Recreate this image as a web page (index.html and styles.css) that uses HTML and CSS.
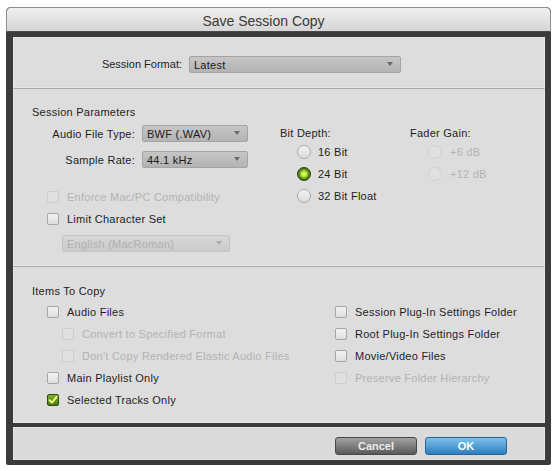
FILE: index.html
```html
<!DOCTYPE html>
<html>
<head>
<meta charset="utf-8">
<title>Save Session Copy</title>
<link rel="stylesheet" href="styles.css">
</head>
<body>
<div class="window">
  <div class="titlebar">Save Session Copy</div>
  <div class="frame">
    <div class="main">
      <section class="panel panel-format">
        <span class="format-label">Session Format:</span>
        <div class="select select-format">Latest</div>
      </section>

      <section class="panel panel-params">
        <div class="heading">Session Parameters</div>
        <div class="params">
          <div class="col-left">
            <div class="field"><span class="field-label">Audio File Type:</span><div class="select select-small">BWF (.WAV)</div></div>
            <div class="field field-2"><span class="field-label">Sample Rate:</span><div class="select select-small">44.1 kHz</div></div>
            <div class="check disabled check-first"><span class="box"></span>Enforce Mac/PC Compatibility</div>
            <div class="check check-second"><span class="box"></span>Limit Character Set</div>
            <div class="select select-disabled">English (MacRoman)</div>
          </div>
          <div class="col-bits">
            <div class="group-label">Bit Depth:</div>
            <div class="radio"><span class="dot"></span>16 Bit</div>
            <div class="radio"><span class="dot on"></span>24 Bit</div>
            <div class="radio"><span class="dot"></span>32 Bit Float</div>
          </div>
          <div class="col-gain">
            <div class="group-label">Fader Gain:</div>
            <div class="radio disabled"><span class="dot"></span>+6 dB</div>
            <div class="radio disabled"><span class="dot"></span>+12 dB</div>
          </div>
        </div>
      </section>

      <section class="panel panel-items">
        <div class="heading heading-items">Items To Copy</div>
        <div class="items">
          <div class="items-left">
            <div class="check"><span class="box"></span>Audio Files</div>
            <div class="check indent disabled"><span class="box"></span>Convert to Specified Format</div>
            <div class="check indent disabled"><span class="box"></span>Don't Copy Rendered Elastic Audio Files</div>
            <div class="check"><span class="box"></span>Main Playlist Only</div>
            <div class="check"><span class="box checked"><svg viewBox="0 0 12 12" width="12" height="12"><path d="M2.6 6.2 L5 8.6 L9.6 2.8" fill="none" stroke="#eaf97a" stroke-width="2" stroke-linecap="round" stroke-linejoin="round"/></svg></span>Selected Tracks Only</div>
          </div>
          <div class="items-right">
            <div class="check"><span class="box"></span>Session Plug-In Settings Folder</div>
            <div class="check"><span class="box"></span>Root Plug-In Settings Folder</div>
            <div class="check"><span class="box"></span>Movie/Video Files</div>
            <div class="check disabled"><span class="box"></span>Preserve Folder Hierarchy</div>
          </div>
        </div>
      </section>
    </div>

    <div class="buttons">
      <button class="btn btn-cancel">Cancel</button>
      <button class="btn btn-ok">OK</button>
    </div>
  </div>
</div>
</body>
</html>
```

FILE: styles.css
```css
* { box-sizing: border-box; }

body {
  margin: 0;
  background: #ffffff;
  font-family: "Liberation Sans", Arial, sans-serif;
  font-size: 11px;
  letter-spacing: 0.25px;
  color: #1e1e1e;
}

.window {
  margin: 7px 0 0 6px;
  width: 545px;
  background: #3b3b3b;
  border-radius: 5px 5px 2px 2px;
}

.titlebar {
  height: 25px;
  border: 1px solid #8f8f8f;
  border-bottom-color: #4a4a4a;
  border-radius: 5px 5px 0 0;
  background: linear-gradient(#efefef, #d6d6d6);
  text-align: center;
  font-size: 14px;
  letter-spacing: 0;
  line-height: 22px;
  padding: 2px 30px 0 0;
  color: #3a3a3a;
}

.frame {
  padding: 5px 6px 5px 7px;
  display: flex;
  flex-direction: column;
  gap: 4px;
}

.main {
  display: flex;
  flex-direction: column;
  height: 386px;
  background: #dcdcdc;
}

.panel {
  border: 1px solid #e8e8e8;
  background: #dddddd;
}

.panel + .panel {
  border-top: 1px solid #a9a9a9;
}

/* Session format */
.panel-format {
  height: 51px;
  display: flex;
  align-items: flex-start;
  padding-top: 18px;
}

.format-label {
  width: 168px;
  text-align: right;
  line-height: 17px;
  margin-right: 7px;
  letter-spacing: 0;
}

.select {
  position: relative;
  height: 17px;
  line-height: 17px;
  padding-left: 4px;
  border: 1px solid #a4a4a4;
  border-radius: 2px;
  background: linear-gradient(#c6c6c6, #b3b3b3);
  color: #1a1a1a;
}

.select::after {
  content: "";
  position: absolute;
  right: 7px;
  top: 5px;
  border-left: 3px solid transparent;
  border-right: 3px solid transparent;
  border-top: 4px solid #6a6a6a;
}

.select-format { width: 212px; }
.select-small { width: 106px; }

.select-disabled {
  width: 168px;
  margin-left: 30px;
  margin-top: 8px;
  background: linear-gradient(#d6d6d6, #cbcbcb);
  border-color: #c4c4c4;
  color: #b0b0b0;
}
.select-disabled::after { border-top-color: #aaaaaa; }

/* Session parameters */
.panel-params {
  height: 178px;
  padding: 17px 0 0 18px;
}

.heading {
  line-height: 13px;
  margin-bottom: 6px;
}

.params {
  display: flex;
}

.col-left {
  width: 216px;
  display: flex;
  flex-direction: column;
  align-items: flex-start;
}

.field {
  display: flex;
  align-items: center;
  height: 17px;
}

.field-2 { margin-top: 9px; }

.field-label {
  width: 103px;
  text-align: right;
  margin-right: 7px;
}

.check {
  display: flex;
  align-items: center;
  height: 17px;
  padding-left: 15px;
  white-space: nowrap;
}

.check-first { margin-top: 20px; }
.check-second { margin-top: 5px; }

.box {
  width: 12px;
  height: 12px;
  margin-right: 8px;
  border: 1px solid #a6a6a6;
  border-radius: 2px;
  background: linear-gradient(#f3f3f3, #dedede);
  flex: none;
}

.box svg { display: block; margin: -1px; }

.box.checked {
  border-color: #2e4a0c;
  background: linear-gradient(#7fae34, #4b7c14);
}

.disabled { color: #b3b3b3; }
.disabled .box {
  border-color: #cdcdcd;
  background: #e0e0e0;
}

.col-bits {
  width: 130px;
  margin-left: 32px;
}

.col-gain {
  width: 120px;
}

.group-label {
  height: 16px;
  line-height: 17px;
}

.radio {
  display: flex;
  align-items: center;
  height: 22px;
  padding-left: 17px;
  white-space: nowrap;
}

.dot {
  width: 14px;
  height: 14px;
  margin-right: 7px;
  border-radius: 50%;
  border: 1px solid #a9a9a9;
  background: linear-gradient(#f4f4f4, #d9d9d9);
  flex: none;
}

.col-gain .dot { margin-right: 8px; }
.col-gain .radio { padding-left: 18px; }

.dot.on {
  border-color: #273f0c;
  background: radial-gradient(circle, #eaff7a 0, #c2e83a 2.5px, #64961c 4.5px, #35560f 7px);
}

.radio.disabled .dot {
  border-color: #cfcfcf;
  background: #e0e0e0;
}

/* Items to copy */
.panel-items {
  height: 157px;
  padding: 18px 0 0 18px;
}

.heading-items { margin-bottom: 3px; }

.items {
  display: flex;
}

.items-left {
  width: 303px;
}

.items .check { height: 22px; }

.items-right .check { padding-left: 0; }

.check.indent { padding-left: 30px; }

/* Buttons */
.buttons {
  height: 33px;
  background: #dadada;
  border: 1px solid #e6e6e6;
  display: flex;
  justify-content: flex-end;
  align-items: flex-start;
  gap: 8px;
  padding: 9px 37px 0 0;
}

.btn {
  width: 82px;
  height: 18px;
  border-radius: 3px;
  font-family: "Liberation Sans", Arial, sans-serif;
  font-size: 11px;
  font-weight: bold;
  line-height: 16px;
  padding: 0;
}

.btn-cancel {
  border: 1px solid #474747;
  background: linear-gradient(#a3a3a3, #5a5a5a);
  color: #ececec;
}

.btn-ok {
  border: 1px solid #2b6494;
  background: linear-gradient(#7ec1ec, #2d7ebd);
  color: #ffffff;
}
```
